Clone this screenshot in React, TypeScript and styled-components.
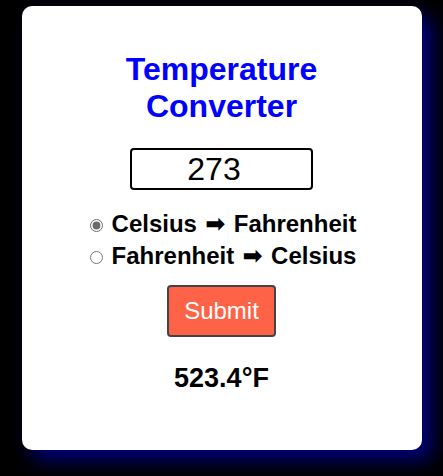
import React, { useState } from "react";
import styled, { createGlobalStyle } from "styled-components";

const GlobalStyle = createGlobalStyle`
  html, body {
    margin: 0;
    padding: 0;
    background: #000;
  }
  body {
    font-family: "Liberation Sans", Arial, sans-serif;
  }
  * { box-sizing: border-box; }
`;

const Page = styled.div`
  display: flex;
  justify-content: center;
  padding-top: 6px;
  min-height: 476px;
`;

const Card = styled.div`
  width: 400px;
  height: 444px;
  background: #fff;
  border-radius: 10px;
  box-shadow: 10px 10px 20px #000080;
  padding: 45px 20px 0;
  display: flex;
  flex-direction: column;
  align-items: center;
`;

const Title = styled.h1`
  margin: 0;
  width: 250px;
  text-align: center;
  color: #0000ff;
  font-size: 32px;
  font-weight: bold;
  line-height: normal;
`;

const NumberInput = styled.input`
  margin-top: 23px;
  width: 183px;
  height: 42px;
  border: 2px solid #000;
  border-radius: 4px;
  padding: 0 2px;
  font-family: "Liberation Sans", Arial, sans-serif;
  font-size: 32px;
  text-align: center;
  color: #000;
  background: #fff;
  outline: none;
`;

const RadioGroup = styled.div`
  margin-top: 20px;
  display: flex;
  flex-direction: column;
  align-items: flex-start;
  gap: 4px;
  padding-left: 3px;
`;

const RadioLabel = styled.label`
  display: flex;
  align-items: center;
  font-size: 24px;
  font-weight: bold;
  color: #000;
  line-height: normal;
`;

const Radio = styled.input`
  width: 13px;
  height: 13px;
  margin: 2px 9px 0 0;
  accent-color: #6a6a6a;
`;

const Arrow = styled.span`
  font-family: "DejaVu Sans", sans-serif;
`;

const SubmitButton = styled.button`
  margin-top: 15px;
  background: #ff6347;
  color: #fff;
  border: 2px solid #444;
  border-radius: 4px;
  padding: 10px 15px;
  font-family: "Liberation Sans", Arial, sans-serif;
  font-size: 24px;
  line-height: normal;
  cursor: pointer;
`;

const Result = styled.p`
  margin: 26px 0 0;
  font-size: 27px;
  font-weight: bold;
  color: #000;
  line-height: normal;
`;

export default function App() {
  const [value, setValue] = useState("273");
  const [mode, setMode] = useState("c2f");
  return (
    <>
      <GlobalStyle />
      <Page>
        <Card>
          <Title>Temperature Converter</Title>
          <NumberInput
            type="number"
            value={value}
            onChange={(e) => setValue(e.target.value)}
          />
          <RadioGroup>
            <RadioLabel>
              <Radio
                type="radio"
                name="mode"
                checked={mode === "c2f"}
                onChange={() => setMode("c2f")}
              />
              Celsius <Arrow>&nbsp;➡&nbsp;</Arrow> Fahrenheit
            </RadioLabel>
            <RadioLabel>
              <Radio
                type="radio"
                name="mode"
                checked={mode === "f2c"}
                onChange={() => setMode("f2c")}
              />
              Fahrenheit <Arrow>&nbsp;➡&nbsp;</Arrow> Celsius
            </RadioLabel>
          </RadioGroup>
          <SubmitButton type="button">Submit</SubmitButton>
          <Result>523.4°F</Result>
        </Card>
      </Page>
    </>
  );
}
